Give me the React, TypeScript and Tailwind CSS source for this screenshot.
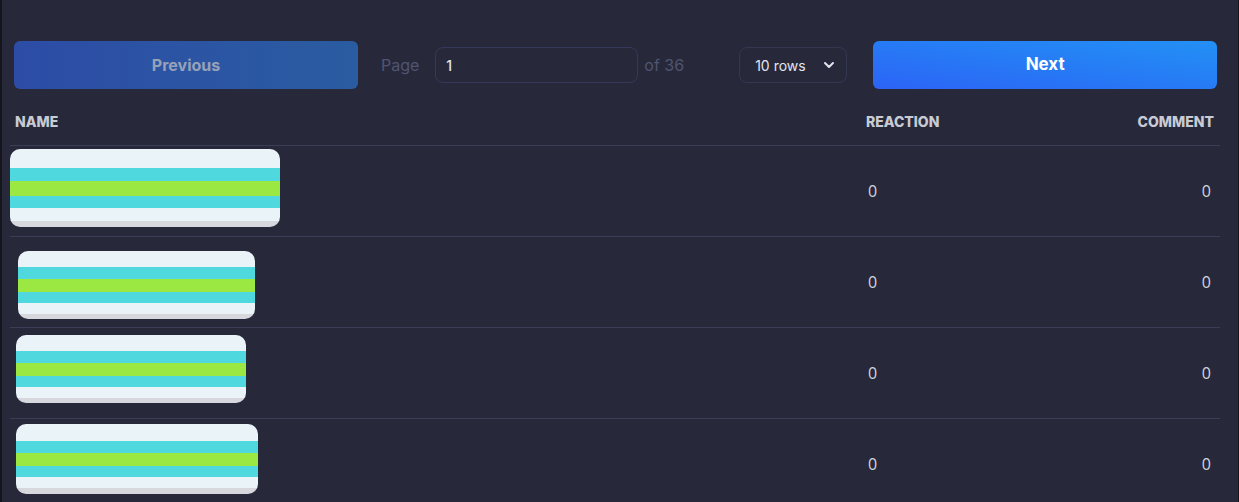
import { ChevronDown } from 'lucide-react';

type Row = {
  id: number;
  box: string;
  reaction: number;
  comment: number;
};

const rows: Row[] = [
  { id: 1, box: 'w-[270px] h-[78px] ml-0 mt-[3px]', reaction: 0, comment: 0 },
  { id: 2, box: 'w-[237px] h-[68px] ml-[8px] mt-[14px]', reaction: 0, comment: 0 },
  { id: 3, box: 'w-[230px] h-[68px] ml-[6px] mt-[7px]', reaction: 0, comment: 0 },
  { id: 4, box: 'w-[242px] h-[70px] ml-[6px] mt-[5px]', reaction: 0, comment: 0 },
];

// scribbled-over avatar/name, kept as plain stripes
function Redacted({ className }: { className: string }) {
  return (
    <div className={`flex flex-col overflow-hidden rounded-[10px] ${className}`}>
      <div className="flex-[18_1_0%] bg-[#eaf3f7]" />
      <div className="flex-[13_1_0%] bg-[#4fd9df]" />
      <div className="flex-[14_1_0%] bg-[#9be843]" />
      <div className="flex-[12_1_0%] bg-[#4fd9df]" />
      <div className="flex-[12_1_0%] bg-[#eaf3f7]" />
      <div className="flex-[6_1_0%] bg-[#d6d8dd]" />
    </div>
  );
}

export default function App() {
  return (
    <div className="flex h-[502px] w-[1239px] bg-[#14151d] font-['Open_Sans',sans-serif]">
      <div className="ml-[2px] mr-[1px] flex flex-1 flex-col overflow-hidden bg-[#27293b]">
        {/* PAGINATION */}
        <div className="mt-[41px] flex items-center px-[12px]">
          <button
            disabled
            className="h-[48px] w-[344px] rounded-md bg-linear-to-r from-[#2d4ca6] to-[#2a5ca1] font-['Inter',sans-serif] text-[16px] font-bold text-[#97a1b7]"
          >
            Previous
          </button>
          <span className="ml-[23px] font-['Inter',sans-serif] text-[16px] text-[#4f5571]">Page</span>
          <input
            type="text"
            defaultValue="1"
            className="ml-[16px] h-[36px] w-[203px] rounded-lg border border-[#34385a] bg-transparent px-[10px] font-['Inter',sans-serif] text-[14px] font-medium text-[#e3e6ef] outline-none"
          />
          <span className="ml-[6px] font-['Inter',sans-serif] text-[16px] text-[#4f5571]">of 36</span>
          <div className="ml-[55px] flex h-[36px] w-[108px] items-center justify-between rounded-lg border border-[#333752] pl-[15px] pr-[9px] font-['Inter',sans-serif] text-[14px] text-[#e3e5ee]">
            <span>10 rows</span>
            <ChevronDown className="h-4 w-4 text-[#e3e5ee]" strokeWidth={3} />
          </div>
          <button className="ml-[26px] h-[48px] w-[344px] rounded-md bg-linear-to-tr from-[#2c63f6] to-[#2390f4] font-['Inter',sans-serif] text-[17px] font-bold text-white">
            Next
          </button>
        </div>

        {/* TABLE */}
        <div className="ml-[8px] mr-[18px] mt-[13px]">
          <div className="flex h-[44px] items-center border-b border-[#3a3d55] pb-[4px] font-['Inter',sans-serif] text-[14px] font-extrabold text-[#c9cbd4]">
            <div className="flex-1 pl-[5px]">NAME</div>
            <div className="w-[144px]">REACTION</div>
            <div className="w-[210px] pr-[6px] text-right">COMMENT</div>
          </div>
          {rows.map((row) => (
            <div
              key={row.id}
              className="flex h-[91px] items-center border-b border-[#3a3d55] text-[16px] text-[#d2d5de]"
            >
              <div className="flex-1 self-start">
                <Redacted className={row.box} />
              </div>
              <div className="w-[144px] pl-[2px]">{row.reaction}</div>
              <div className="w-[210px] pr-[9px] text-right">{row.comment}</div>
            </div>
          ))}
        </div>
      </div>
    </div>
  );
}
